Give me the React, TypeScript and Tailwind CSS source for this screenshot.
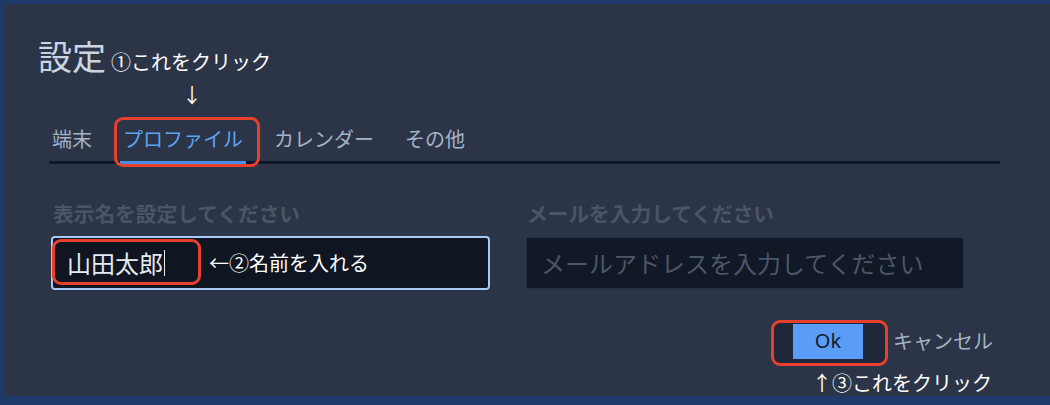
const tabs = ["端末", "プロファイル", "カレンダー", "その他"];

const RedBox = ({ className }: { className: string }) => (
  <div className={`pointer-events-none absolute rounded-[9px] border-[3px] border-[#e8402c] ${className}`} />
);

export default function App() {
  return (
    <div className="h-[405px] w-[1050px] overflow-hidden bg-[#1d3a6b] pl-[4px] pt-[4px] font-['Noto_Sans_CJK_JP','Noto_Sans',sans-serif]">
      <div className="h-[392px] w-full bg-[#2b3547] pt-[35px]">
        {/* title */}
        <div className="flex h-[42px] items-baseline pl-[34px]">
          <span className="text-[34px] leading-none text-[#cbd5e0]">設定</span>
          <span className="ml-[5px] text-[20px] leading-none text-white">①これをクリック</span>
        </div>
        <div className="ml-[178px] mt-[4px] h-[20px] text-[20px] leading-none text-white">↓</div>

        {/* tabs */}
        <div className="ml-[45px] mr-[50px] mt-[24px] flex gap-[25px] border-b-[3px] border-[#0f172a]">
          {tabs.map((t) => {
            const active = t === "プロファイル";
            return (
              <div
                key={t}
                className={
                  active
                    ? "relative -mb-[3px] border-b-[3px] border-[#4a90e2] px-[3px] pb-[12px] text-[20px] leading-none text-[#5ea3f0]"
                    : "px-[3px] pb-[12px] text-[20px] leading-none text-[#a5b3c6]"
                }
              >
                {t}
                {active && <RedBox className="-bottom-[6px] -left-[6px] -right-[14px] -top-[12px]" />}
              </div>
            );
          })}
        </div>

        {/* fields */}
        <div className="ml-[49px] mt-[39px] flex gap-[36px]">
          <div className="flex w-[438px] flex-col">
            <div className="text-[20.7px] font-semibold leading-none text-[#4a5568]">表示名を設定してください</div>
            <div className="relative mt-[14px] flex h-[50px] w-[435px] items-center rounded-[2px] bg-[#0f1521] pl-[14px] ring-2 ring-[#a9c8f2]">
              <span className="text-[24px] leading-none text-[#e6ebf2]">山田太郎</span>
              <span className="ml-[1px] h-[26px] w-[1px] bg-[#e6ebf2]" />
              <span className="ml-[44px] text-[20px] leading-none text-white">←②名前を入れる</span>
              <RedBox className="bottom-[3px] left-[-1px] top-[1px] w-[149px]" />
            </div>
          </div>
          <div className="flex flex-col">
            <div className="text-[20.7px] font-semibold leading-none text-[#4a5568]">メールを入力してください</div>
            <div className="mt-[14px] flex h-[50px] w-[436px] items-center bg-[#111826] pl-[14px] shadow-[0_0_0_1px_#263043]">
              <span className="text-[24px] leading-none text-[#4c5668]">メールアドレスを入力してください</span>
            </div>
          </div>
        </div>

        {/* footer */}
        <div className="mt-[36px] flex items-center justify-end pr-[57px]">
          <div className="relative">
            <div className="absolute -bottom-[7px] -left-[22px] -right-[25px] -top-[4px] rounded-[9px] border-[3px] border-[#e8402c] bg-[#1f2838]" />
            <div className="relative flex h-[35px] w-[70px] items-center justify-center bg-[#5a9cf7] font-['Noto_Sans',sans-serif] text-[20px] text-[#141c2b]">
              Ok
            </div>
          </div>
          <span className="ml-[30px] text-[20px] leading-none text-[#a5b3c6]">キャンセル</span>
        </div>
        <div className="mt-[14px] flex justify-end pr-[58px]">
          <span className="text-[20px] leading-none text-white">↑③これをクリック</span>
        </div>
      </div>
    </div>
  );
}
